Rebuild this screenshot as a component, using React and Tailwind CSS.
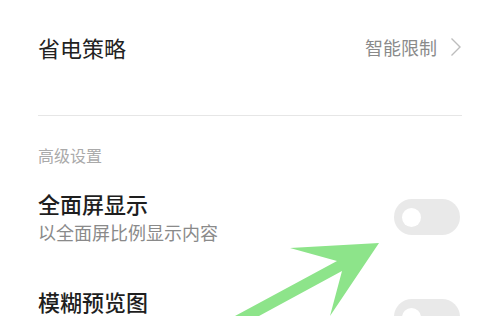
const font = { fontFamily: '"Noto Sans CJK SC", "Noto Sans", sans-serif' };

function Toggle() {
  return (
    <div className="mr-[2px] flex h-[36px] w-[66px] shrink-0 items-center rounded-full bg-[#e9e9e9] pl-[8px]">
      <span className="h-[19px] w-[19px] rounded-full bg-white" />
    </div>
  );
}

function Chevron() {
  return (
    <svg width="12" height="20" viewBox="0 0 12 20" fill="none" className="ml-[13px]">
      <path d="M1.5 1.5 L10 10 L1.5 18.5" stroke="#bdbdbd" strokeWidth="1.4" />
    </svg>
  );
}

function Arrow() {
  return (
    <svg className="pointer-events-none absolute left-0 top-0" width="482" height="316" viewBox="0 0 482 316">
      <polygon
        points="379,243 290,248 337,261 235,316 259,316 342,271 330,316"
        fill="#8de48a"
      />
    </svg>
  );
}

export default function App() {
  return (
    <div className="relative h-[316px] w-[482px] overflow-hidden bg-white" style={font}>
      <div className="pl-[38px] pr-[20px]">
        <div className="flex h-[94px] items-center justify-between">
          <span className="text-[22px] leading-[22px] text-[#222]">省电策略</span>
          <div className="flex items-center">
            <span className="ml-[2px] text-[18px] leading-[18px] text-[#8a8a8a]">智能限制</span>
            <Chevron />
          </div>
        </div>
        <div className="mt-[21px] h-px bg-[#e6e6e6]" />
        <div className="mt-[31px] text-[16px] leading-[16px] text-[#aaaaaa]">高级设置</div>
        <div className="mt-[29px] flex items-start justify-between">
          <div className="flex flex-col">
            <span className="text-[22px] leading-[22px] font-medium text-[#1e1e1e]">全面屏显示</span>
            <span className="mt-[9px] text-[18px] leading-[18px] text-[#8a8a8a]">以全面屏比例显示内容</span>
          </div>
          <div className="mt-[7px]">
            <Toggle />
          </div>
        </div>
        <div className="mt-[49px] flex items-start justify-between">
          <span className="text-[22px] leading-[22px] font-medium text-[#1e1e1e]">模糊预览图</span>
          <div className="mt-[9px]">
            <Toggle />
          </div>
        </div>
      </div>
      <Arrow />
    </div>
  );
}
